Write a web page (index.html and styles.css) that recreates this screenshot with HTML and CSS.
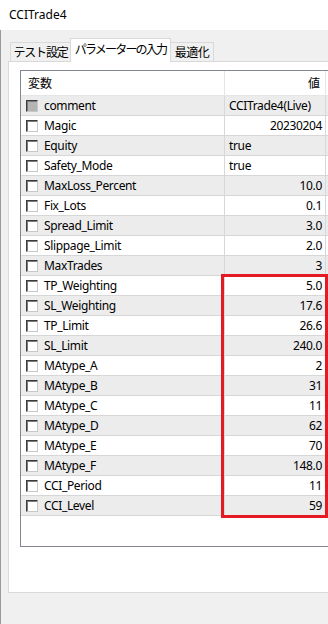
FILE: index.html
```html
<!DOCTYPE html>
<html lang="ja">
<head>
    <meta charset="UTF-8">
    <meta name="viewport" content="width=device-width, initial-scale=1.0">
    <title>CCITrade4</title>
    <link rel="stylesheet" href="styles.css">
</head>
<body>
    <div class="titlebar">CCITrade4</div>
    <div class="client">
        <div class="tabs">
            <div class="tab tab-test">テスト設定</div>
            <div class="tab tab-params active">パラメーターの入力</div>
            <div class="tab tab-opt">最適化</div>
        </div>
        <div class="panel">
            <div class="list">
                <div class="head">
                    <div class="head-name">変数</div>
                    <div class="head-val">値</div>
                </div>
                <div class="rows">
                    <div class="row"><span class="cell-name"><span class="check disabled"></span>comment</span><span class="cell-val text">CCITrade4(Live)</span></div>
                    <div class="row"><span class="cell-name"><span class="check"></span>Magic</span><span class="cell-val">20230204</span></div>
                    <div class="row"><span class="cell-name"><span class="check"></span>Equity</span><span class="cell-val text">true</span></div>
                    <div class="row"><span class="cell-name"><span class="check"></span>Safety_Mode</span><span class="cell-val text">true</span></div>
                    <div class="row"><span class="cell-name"><span class="check"></span>MaxLoss_Percent</span><span class="cell-val">10.0</span></div>
                    <div class="row"><span class="cell-name"><span class="check"></span>Fix_Lots</span><span class="cell-val">0.1</span></div>
                    <div class="row"><span class="cell-name"><span class="check"></span>Spread_Limit</span><span class="cell-val">3.0</span></div>
                    <div class="row"><span class="cell-name"><span class="check"></span>Slippage_Limit</span><span class="cell-val">2.0</span></div>
                    <div class="row"><span class="cell-name"><span class="check"></span>MaxTrades</span><span class="cell-val">3</span></div>
                    <div class="row"><span class="cell-name"><span class="check"></span>TP_Weighting</span><span class="cell-val">5.0</span></div>
                    <div class="row"><span class="cell-name"><span class="check"></span>SL_Weighting</span><span class="cell-val">17.6</span></div>
                    <div class="row"><span class="cell-name"><span class="check"></span>TP_Limit</span><span class="cell-val">26.6</span></div>
                    <div class="row"><span class="cell-name"><span class="check"></span>SL_Limit</span><span class="cell-val">240.0</span></div>
                    <div class="row"><span class="cell-name"><span class="check"></span>MAtype_A</span><span class="cell-val">2</span></div>
                    <div class="row"><span class="cell-name"><span class="check"></span>MAtype_B</span><span class="cell-val">31</span></div>
                    <div class="row"><span class="cell-name"><span class="check"></span>MAtype_C</span><span class="cell-val">11</span></div>
                    <div class="row"><span class="cell-name"><span class="check"></span>MAtype_D</span><span class="cell-val">62</span></div>
                    <div class="row"><span class="cell-name"><span class="check"></span>MAtype_E</span><span class="cell-val">70</span></div>
                    <div class="row"><span class="cell-name"><span class="check"></span>MAtype_F</span><span class="cell-val">148.0</span></div>
                    <div class="row"><span class="cell-name"><span class="check"></span>CCI_Period</span><span class="cell-val">11</span></div>
                    <div class="row"><span class="cell-name"><span class="check"></span>CCI_Level</span><span class="cell-val">59</span></div>
                </div>
                <div class="highlight"></div>
            </div>
        </div>
    </div>
</body>
</html>
```

FILE: styles.css
```css
body {
    margin: 0;
    width: 328px;
    height: 624px;
    overflow: hidden;
    font-family: "Noto Sans", "Noto Sans CJK JP", sans-serif;
    font-size: 12px;
    color: #000;
    background-color: #fff;
}

.titlebar {
    height: 30px;
    line-height: 30px;
    padding-left: 9px;
    background-color: #fff;
}

.client {
    height: 594px;
    background-color: #f0f0f0;
    border-left: 1px solid #9a9a9a;
    overflow: hidden;
}

/* tab strip */
.tabs {
    display: flex;
    align-items: flex-end;
    height: 31px;
    padding-left: 9px;
}

.tab {
    box-sizing: border-box;
    height: 19px;
    border: 1px solid #d9d9d9;
    border-bottom: none;
    background-color: #f0f0f0;
    font-family: "Noto Sans CJK JP", sans-serif;
    font-size: 12px;
    line-height: 17px;
    text-align: center;
    white-space: nowrap;
}

.tab-test {
    width: 61px;
    letter-spacing: -1.2px;
}

.tab-params {
    width: 101px;
    letter-spacing: -1.8px;
}

.tab-opt {
    width: 44px;
    letter-spacing: -0.5px;
}

.tab.active {
    position: relative;
    z-index: 1;
    height: 24px;
    margin-bottom: -1px;
    margin-left: -1px;
    margin-right: -1px;
    line-height: 19px;
    background-color: #fff;
    padding-bottom: 3px;
}

/* tab page */
.panel {
    box-sizing: border-box;
    width: 336px;
    height: 532px;
    margin-left: 7px;
    padding: 8px 0 0 11px;
    background-color: #fff;
    border: 1px solid #d9d9d9;
}

.list {
    position: relative;
    box-sizing: border-box;
    height: 477px;
    border: 1px solid #828790;
    background-color: #fff;
}

.head {
    display: flex;
    height: 25px;
    border-bottom: 1px solid #e5e5e5;
    box-sizing: border-box;
    font-family: "Noto Sans CJK JP", sans-serif;
}

.head-name {
    box-sizing: border-box;
    width: 204px;
    padding-left: 7px;
    line-height: 24px;
    border-right: 1px solid #e5e5e5;
}

.head-val {
    box-sizing: border-box;
    width: 101px;
    padding-right: 5px;
    line-height: 24px;
    text-align: right;
    border-right: 1px solid #e5e5e5;
}

.row {
    display: flex;
    height: 20px;
    box-sizing: border-box;
    border-bottom: 1px solid #d7d7d7;
    line-height: 19px;
    letter-spacing: -0.35px;
}

.row:nth-child(odd) {
    background-color: #ececec;
}

.cell-name {
    box-sizing: border-box;
    display: flex;
    align-items: center;
    width: 204px;
    padding-left: 5px;
    border-right: 1px solid #d7d7d7;
    white-space: nowrap;
}

.cell-val {
    box-sizing: border-box;
    width: 101px;
    padding-right: 3px;
    text-align: right;
    border-right: 1px solid #d7d7d7;
    white-space: nowrap;
}

.cell-val.text {
    text-align: left;
    padding-left: 4px;
}

.check {
    box-sizing: border-box;
    flex-shrink: 0;
    width: 12px;
    height: 12px;
    margin-right: 6px;
    border: 1px solid;
    border-color: #3c3c3c #c8c8c8 #c8c8c8 #3c3c3c;
    box-shadow: inset 1px 1px 0 #7a7a7a;
    background-color: #fff;
}

.check.disabled {
    background-color: #b4b4b4;
}

.highlight {
    position: absolute;
    left: 200px;
    top: 203px;
    width: 107px;
    height: 244px;
    box-sizing: border-box;
    border: 3px solid #e51b24;
}
```
